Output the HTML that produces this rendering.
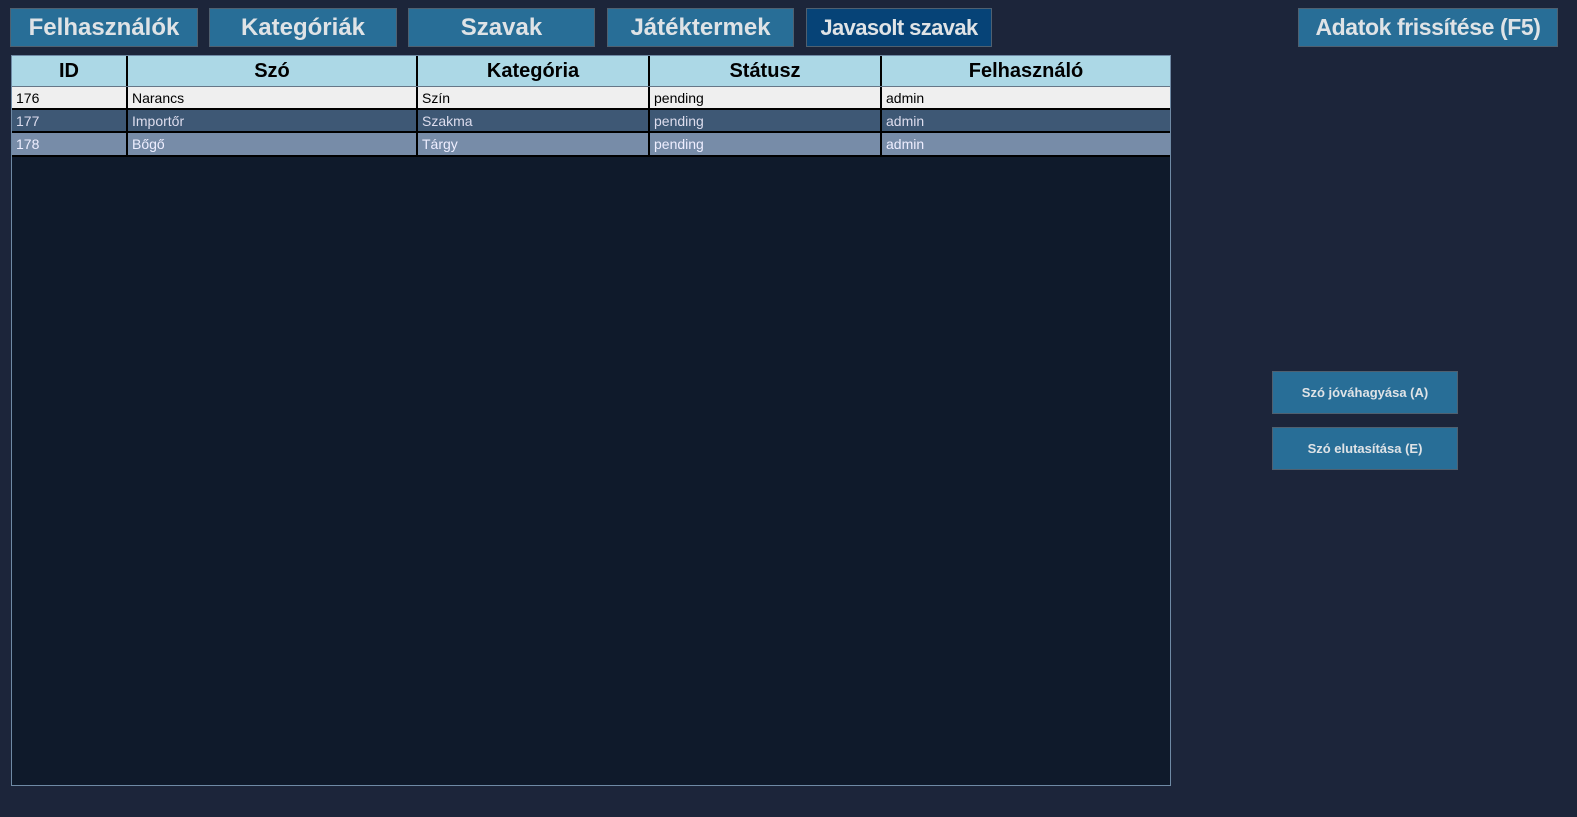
<!DOCTYPE html>
<html><head><meta charset="utf-8"><style>
body{margin:0;width:1577px;height:817px;background:#1c253a;font-family:"Segoe UI","Liberation Sans","DejaVu Sans",sans-serif;position:relative;overflow:hidden}
.b{position:absolute;top:8px;height:37px;background:#286e97;border:1px solid #4f6070;color:#dfe3e6;font-weight:bold;font-size:24px;display:flex;align-items:center;justify-content:center;white-space:nowrap}
.s{position:absolute;left:1272px;width:184px;height:41px;background:#286e97;border:1px solid #4f6070;color:#dfe3e6;font-weight:bold;font-size:13px;display:flex;align-items:center;justify-content:center}
#t{position:absolute;left:11px;top:55px;width:1158px;height:729px;background:#0f1a2b;border:1px solid #6f8aa5}
.r{position:absolute;left:0;width:1158px;display:flex}
.r div{box-sizing:border-box;border-right:2px solid #000;padding-left:4px;font-size:14px;display:flex;align-items:center;white-space:nowrap}
.h div{justify-content:center;padding:0;font-weight:bold;font-size:20px;background:#acd8e6;color:#000}
</style></head><body>
<div class="b" style="left:10px;width:186px">Felhasználók</div>
<div class="b" style="left:209px;width:186px">Kategóriák</div>
<div class="b" style="left:408px;width:185px">Szavak</div>
<div class="b" style="left:607px;width:185px">Játéktermek</div>
<div class="b" style="left:806px;width:184px;background:#064377;font-size:22px;letter-spacing:-0.6px">Javasolt szavak</div>
<div class="b" style="left:1298px;width:258px;font-size:23px;letter-spacing:-0.4px">Adatok frissítése (F5)</div>
<div id="t">
<div class="r h" style="top:0;height:30px;border-bottom:1px solid #678"><div style="width:116px">ID</div><div style="width:290px">Szó</div><div style="width:232px">Kategória</div><div style="width:232px">Státusz</div><div style="width:288px;border:0">Felhasználó</div></div>
<div class="r" style="top:31px;height:21px;background:#efefef;color:#000;border-bottom:2px solid #000"><div style="width:116px">176</div><div style="width:290px">Narancs</div><div style="width:232px">Szín</div><div style="width:232px">pending</div><div style="width:288px;border:0">admin</div></div>
<div class="r" style="top:54px;height:21px;background:#3e5875;color:#dde;border-bottom:2px solid #000"><div style="width:116px">177</div><div style="width:290px">Importőr</div><div style="width:232px">Szakma</div><div style="width:232px">pending</div><div style="width:288px;border:0">admin</div></div>
<div class="r" style="top:77px;height:22px;background:#778ca8;color:#eef;border-bottom:2px solid #000"><div style="width:116px">178</div><div style="width:290px">Bőgő</div><div style="width:232px">Tárgy</div><div style="width:232px">pending</div><div style="width:288px;border:0">admin</div></div>
</div>
<div class="s" style="top:371px">Szó jóváhagyása (A)</div>
<div class="s" style="top:427px">Szó elutasítása (E)</div>
</body></html>
